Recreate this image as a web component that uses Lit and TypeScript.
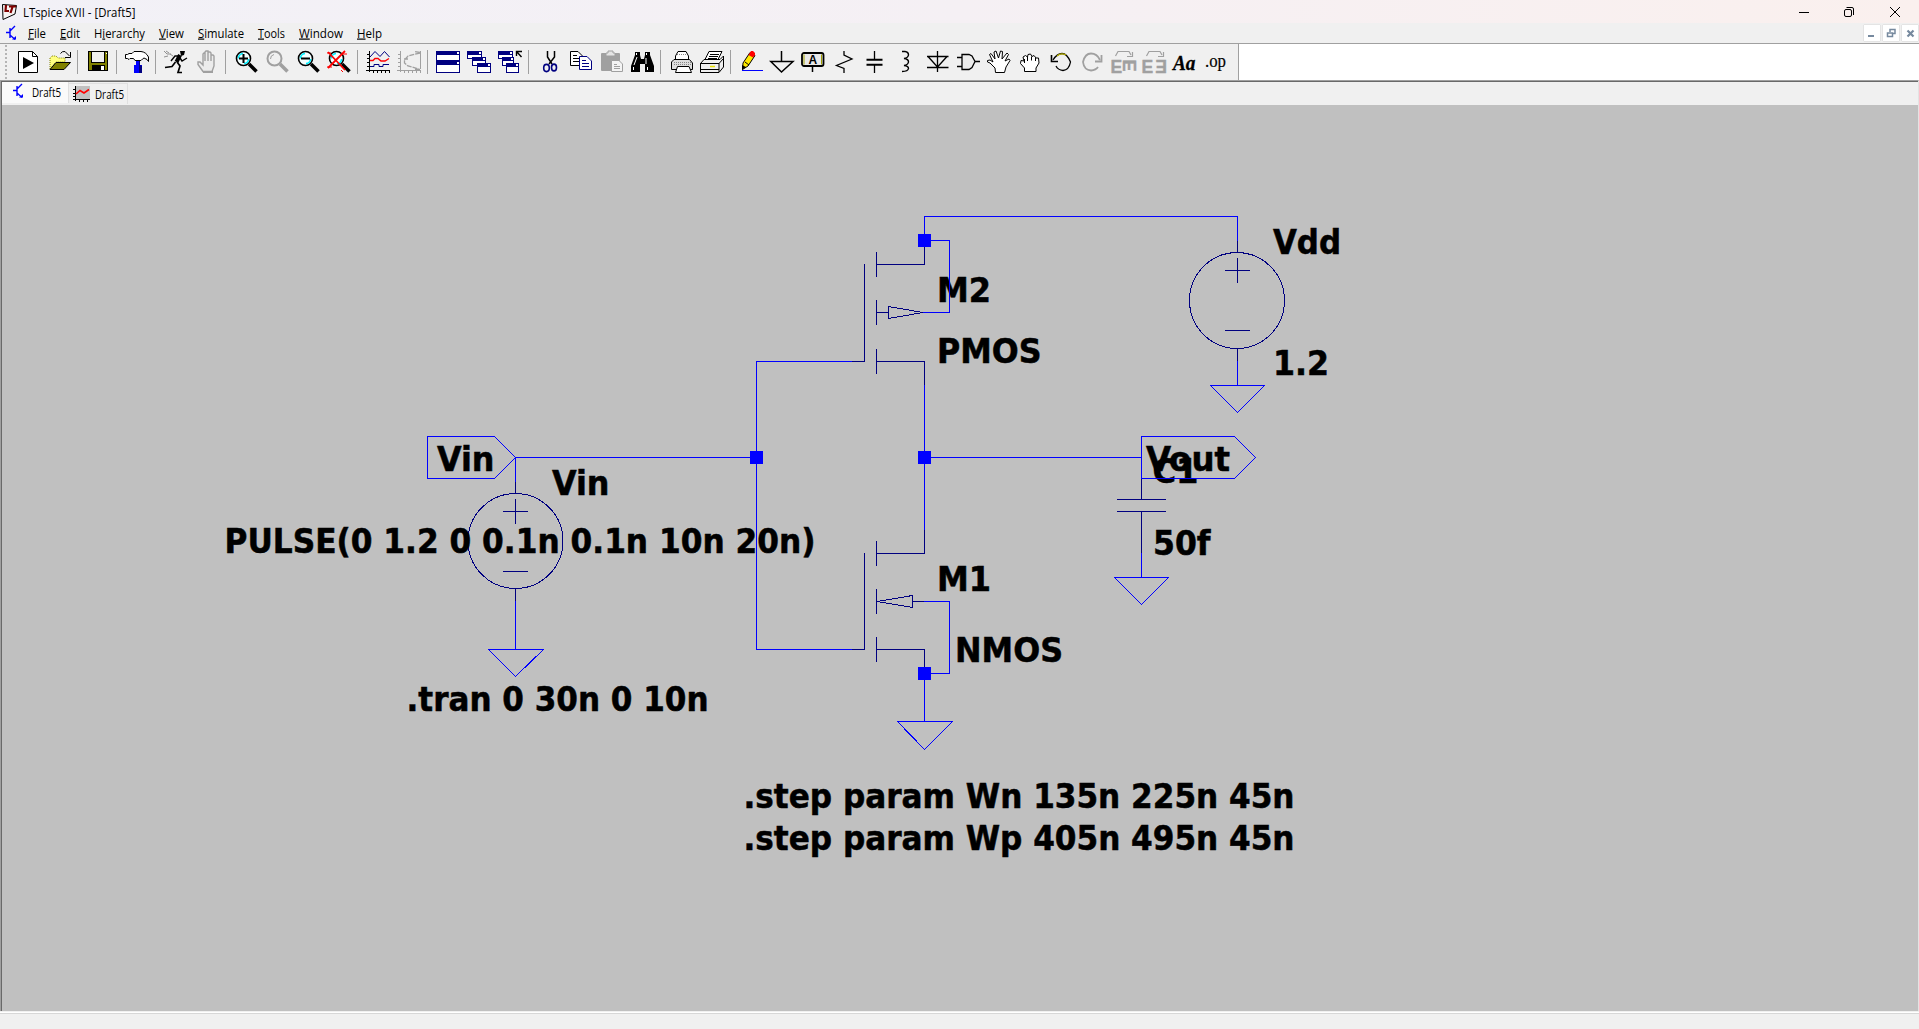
import { LitElement, html, svg, css, nothing } from "lit";
import { customElement } from "lit/decorators.js";

const lens = (inner: unknown, gray = false) => svg`
  <circle cx="9.5" cy="8.5" r="7" fill=${gray ? "none" : "#f4ffff"} stroke=${gray ? "#a0a0a0" : "#000"} stroke-width=${gray ? 2 : 1.6}/>
  ${gray
    ? svg`<path d="M5.5 9A4.5 4.5 0 0 1 9 4.5" fill="none" stroke="#a0a0a0"/>`
    : svg`<path d="M4.5 8.5A5 5 0 0 1 9 3.5M14.6 9A5 5 0 0 1 10 13.6" fill="none" stroke="#00f0ff" stroke-width="1.6"/>`}
  <path d="M15 14L22.5 21.5" stroke=${gray ? "#a0a0a0" : "#000"} stroke-width="3.6"/>
  ${inner}`;

const win = (x: number, y: number, w: number, h: number) => svg`
  <rect x=${x + 0.5} y=${y + 0.5} width=${w - 1} height=${h - 1} fill="#fff" stroke="#000080"/>
  <rect x=${x} y=${y} width=${w} height="4" fill="#000080"/>
  <rect x=${x + w - 3} y=${y + 1} width="2" height="2" fill="#fff"/>`;

const ICONS: Record<string, unknown> = {
  newdoc: svg`<path d="M2.5 1.5H16.5L21.5 6.5V22.5H2.5Z" fill="#fff" stroke="#000"/><path d="M16.5 1.5V6.5H21.5" fill="none" stroke="#000"/><path d="M7 7V19L18 13Z"/>`,
  open: svg`<path d="M3 19V8L5 6H9L11 8H18V12H9Z" fill="#ffff80" stroke="#808000" stroke-dasharray="1 1"/><path d="M3 19.5L9 12.5H23.5L17 19.5Z" fill="#808000" stroke="#000"/><path d="M13.5 3.5Q15 1 18 1.5L22.5 6M23.5 2V7.5H18" fill="none" stroke="#000"/>`,
  save: svg`<rect x="2.5" y="1.5" width="19" height="19" fill="#808000" stroke="#000"/><rect x="5.5" y="1.5" width="13" height="11" fill="#f0f0f0" stroke="#000"/><rect x="6" y="15" width="13" height="6"/><rect x="15" y="16" width="3" height="4" fill="#fff"/><rect x="20" y="3" width="1" height="1" fill="#fff"/>`,
  hammer: svg`<path d="M.5 4.5H2.5L4 3.5H7L9 1.5H16Q21 2 23.5 7V11.5L22 9.5L19 8L17.5 9L16 10.5H10L8.5 8.5H5L4 9.5L2.5 8.5H.5Z" fill="#fff" stroke="#000"/><path d="M11 11H15V15H17V23H9V15H11Z" fill="#0000ff"/><path d="M15 11V15L17 16V23H14V11Z" fill="#000080"/>`,
  run: svg`<path d="M16 1H21L20 5L17 6Z"/><path d="M16 5L12.5 12" stroke="#000" stroke-width="4"/><path d="M15 6H11L7 11M16 8L18 11L23 8" fill="none" stroke="#000" stroke-width="1.4"/><path d="M11.5 12L8 16.5L1 17.5M13 12L16 16L14 22.5H18" fill="none" stroke="#000" stroke-width="1.7"/><path d="M0 1L3 4H7M2 1L5 3M6 4L9 6M0 7L4 6" fill="none" stroke="#909090"/>`,
  halt: svg`<path d="M8 21.5L3 14.5L3 12H5L8 15V4L9 3H10V11V2L11 1H13V11V2H15L16 3V11V5H18L19 6V16L17 21.5Z" fill="#ececec" stroke="#a0a0a0" stroke-width="1.4"/><path d="M8 22H18" stroke="#a0a0a0" stroke-width="2"/>`,
  zoomin: lens(svg`<path d="M5 8.5H14M9.5 4V13" stroke="#000" stroke-width="2"/>`),
  zoompan: lens(nothing, true),
  zoomout: lens(svg`<path d="M5 8.5H14" stroke="#000" stroke-width="2"/>`),
  zoomfit: lens(svg`<path d="M1 2L18 20M18 1L1 18" stroke="#ff0000" stroke-width="1.8"/><path d="M0 3H4M15 4H20M0 17H5M14 20L16 22" stroke="#ff0000"/>`),
  plot: svg`<path d="M3.5 1V22M0 20.5H24M1 4.5H3M1 8.5H3M1 12.5H3M1 16.5H3M7.5 20V23M11.5 20V23M15.5 20V23M19.5 20V23M23.5 20V23" stroke="#000"/><path d="M4 7L9 1.5L14 6.5L18.5 1.5L23.5 7M4 16.5H8V14.5H13V16.5H17V14.5H23" fill="none" stroke="#000080"/><path d="M4 10.5H7L9 8.5H12L15 11H19L23 8.5" fill="none" stroke="#ff0000" stroke-width="1.4"/>`,
  plotbox: svg`<path d="M3.5 1V22M0 20.5H24M1 4.5H3M1 8.5H3M1 12.5H3M1 16.5H3M7.5 20V23M11.5 20V23M15.5 20V23M19.5 20V23M23.5 20V23M23.5 1V19" stroke="#a0a0a0"/><path d="M23 2.5L18 1.500M23 3L11 6L7.500 10V13L11 16L22 19M18 19.500H24M7 9L11 9" stroke="#a0a0a0" stroke-width="1.300" fill="none" stroke-dasharray="5 1"/>`,
  tile: svg`${win(0, 1, 24, 10)}${win(0, 11, 24, 12)}`,
  cascade: svg`${win(0, 1, 15, 8)}${win(5, 7, 14, 9)}${win(10, 13, 14, 10)}`,
  closeall: svg`${win(0, 1, 15, 8)}${win(4, 7, 12, 9)}${win(8, 13, 13, 10)}<path d="M18.5 6V1.5H24M19 2L23.5 7" fill="none" stroke="#000" stroke-width="1.4"/>`,
  cut: svg`<path d="M10.5 1V7L15 14M17.5 1V7L12 14" fill="none" stroke="#000" stroke-width="1.5"/><ellipse cx="9.5" cy="18" rx="2.8" ry="3.6" fill="none" stroke="#000080" stroke-width="1.6"/><ellipse cx="17" cy="17.5" rx="2.5" ry="3.4" fill="none" stroke="#000080" stroke-width="1.6"/>`,
  copy: svg`<path d="M2.5 1.5H10L14.5 6V15.5H2.5Z" fill="#fff" stroke="#000"/><path d="M5 5.5H9M5 8.5H11M5 11.5H11" stroke="#000"/><path d="M11.5 6.5H19L23.5 11V19.5H11.5Z" fill="#fff" stroke="#000080"/><path d="M14 10.5H18M14 13.5H21M14 16.5H21" stroke="#000080"/>`,
  paste: svg`<rect x="2" y="3" width="19" height="18" rx="1" fill="#a0a0a0"/><path d="M7 6V3H9V1H14V3H16V6Z" fill="#e4e4e4" stroke="#a0a0a0"/><path d="M12.5 10.5H20L23.5 14V21.5H12.5Z" fill="#f4f4f4" stroke="#a0a0a0"/><path d="M15 14.5H18M15 16.5H21M15 18.5H21" stroke="#a0a0a0"/>`,
  find: svg`<path d="M5 2H10V5L11 9H14L15 5V2H20V5L24 16V22H15V14H10V22H1V16L5 5Z"/><path d="M6.5 3V5M16.5 3V5M4 15L7 7M16 14V8M3.500 17V20M17.5 17V20" stroke="#fff"/>`,
  print: svg`<path d="M6.500 9V6L9 1.5H17L19.5 6V9" fill="#fff" stroke="#000"/><path d="M2.5 19.5V12L5 9.500H20.500L23.500 13V19.500Z" fill="#ddd" stroke="#000"/><path d="M8.500 16.500H20L22.500 22.500H6.500Z" fill="#fff" stroke="#000"/><path d="M8 4.500H18M5 12.500H22M5 14.500H22" stroke="#888" stroke-dasharray="1 1"/>`,
  setup: svg`<path d="M5 9.500L9 1.500H22L18 9.500" fill="#fff" stroke="#000"/><path d="M10 4.500H19M9 6.500H18M8 8.500H17" stroke="#000"/><path d="M.5 13.500L4 9.500H20L23.500 6V17L19 22.500H.5Z" fill="#f0f0f0" stroke="#000"/><path d="M0 13.500H19L23 9M19 13V22M0 19.500H19" fill="none" stroke="#000"/><path d="M10 16.500H15" stroke="#e8e000" stroke-width="1.5"/>`,
  wire: svg`<path d="M3.500 19.500L4 13L11 2.500L16 5.500L9 16Z" fill="#ffe900" stroke="#000"/><path d="M3 20V15L7 17Z"/><path d="M9.500 5L12 1H14L16 3V5L14 7.500Z" fill="#ff0000"/><path d="M6 12L10 15" stroke="#000"/><path d="M3 20.500H24" stroke="#0000ff"/>`,
  ground: svg`<path d="M11.500 1V11.500M.8 11.500H23L11.500 22Z" fill="none" stroke="#000" stroke-width="1.500"/>`,
  label: svg`<rect x="1" y="3" width="21.500" height="13" rx="2" fill="#e8e8e8" stroke="#000" stroke-width="1.800"/><path d="M3 4.500V14.500M20.500 4.500V14.500" stroke="#a0a000"/><path d="M11.500 16V22" stroke="#000" stroke-width="1.500"/><text x="7.500" y="13.800" font-family="Liberation Sans" font-weight="700" font-size="12">A</text>`,
  resistor: svg`<path d="M12 1V5L20 9L4.500 15.500L12 18.500V23" fill="none" stroke="#000" stroke-width="1.300"/>`,
  capacitor: svg`<path d="M11.500 1V9M11.500 15V23" stroke="#000" stroke-width="1.300"/><path d="M3.500 9.800H19.500M3.500 14.800H19.500" stroke="#000" stroke-width="2"/>`,
  inductor: svg`<path d="M8 1.500H11Q14.500 2 14.500 5Q14 8 10 8.500Q14.500 9 14.500 12Q14 15 10 15.500Q14.500 16 14.500 18.500Q14 21.500 8 21.500" fill="none" stroke="#000" stroke-width="1.400"/>`,
  diode: svg`<path d="M12.500 1V22M2 6.500H23.500M3 6.500L12.500 17L22 6.500M2 17.500H23.500" fill="none" stroke="#000" stroke-width="1.300"/>`,
  gate: svg`<path d="M1 7.500H6M1 16.500H6M19 11.500H24" stroke="#000" stroke-width="1.300"/><path d="M6 4.500H13L16 6L19 11.500L16 17.500L13 19.500H6Z" fill="#ececec" stroke="#000" stroke-width="1.300"/>`,
  move: svg`<path d="M8.500 22.500L8 18L3 13L.5 12V10.500L3 10L6 12L2.500 4.500L4 3.500L8 9L7 2L9 1L11.500 8L13.500 1L15.500 1.500L15 9L20 3L21.500 4.500L18 11L22 9L23 10.500L19 17L17.500 22.500Z" fill="#fff" stroke="#000"/>`,
  drag: svg`<path d="M6.500 21.500V18L2.500 13.500L3 10.500L6 11L5 7L7.500 5.500L9.500 7L10 4.500L12.500 4L14 6.500L16 5.500L18 8H20.500L21 13L18 18V21.500Z" fill="#fff" stroke="#000"/><path d="M9.500 7V11M13.500 6.500V10.500M17.500 8V11M6.500 9V13" stroke="#000"/>`,
  undo: svg`<path d="M4 10Q8 3.500 13 3.500T21.500 12Q20 20 14 20.500Q9 20 7 16" fill="none" stroke="#000" stroke-width="1.300"/><path d="M8 6Q12 2.500 17 5" fill="none" stroke="#b8b000" stroke-width="1.200"/><path d="M2.500 5V11.500H9" fill="none" stroke="#000" stroke-width="1.600"/>`,
  redo: svg`<path d="M20 10Q17 3.500 11 3.500T3 12Q4 20 11 20.500Q16 20 18 17" fill="none" stroke="#a0a0a0" stroke-width="1.800"/><path d="M21.500 5V11.500H15" fill="none" stroke="#a0a0a0" stroke-width="1.800"/>`,
  rotate: svg`<path d="M4.500 6L7 1.500H18L20 5M21.500 2V6.500H16" fill="none" stroke="#a0a0a0" stroke-width="1.200"/><text class="g" x="-.5" y="22.500">E</text><text class="g" transform="translate(11.500 9.500) rotate(90)" textLength="12" lengthAdjust="spacingAndGlyphs">E</text>`,
  mirror: svg`<path d="M4.500 6L7 1.500H18L20 5M21.500 2V6.500H16" fill="none" stroke="#a0a0a0" stroke-width="1.200"/><text class="g" x="-.5" y="22.500">E</text><text class="g" transform="translate(25 22.500) scale(-1 1)">E</text>`,
  text: svg`<text x="0" y="20" font-family="Liberation Serif" font-weight="700" font-style="italic" font-size="20" stroke="#000" stroke-width=".3" textLength="22.500" lengthAdjust="spacingAndGlyphs">Aa</text>`,
  op: svg`<text x="1" y="17" font-family="Liberation Serif" font-size="19" stroke="#000" stroke-width=".2" textLength="21" lengthAdjust="spacingAndGlyphs">.op</text>`,
};

const GROUPS = [
  ["newdoc", "open"], ["save"], ["hammer"], ["run", "halt"],
  ["zoomin", "zoompan", "zoomout", "zoomfit"], ["plot", "plotbox"],
  ["tile", "cascade", "closeall"], ["cut", "copy", "paste", "find"],
  ["print", "setup"],
  ["wire", "ground", "label", "resistor", "capacitor", "inductor", "diode", "gate", "move", "drag", "undo", "redo", "rotate", "mirror", "text", "op"],
];

// label, index of the access key, cell width, text width
const MENU: [string, number, number, number][] = [
  ["File", 0, 32, 18], ["Edit", 0, 34, 20], ["Hierarchy", 1, 65, 51], ["View", 0, 39, 25],
  ["Simulate", 0, 60, 46], ["Tools", 0, 41, 27], ["Window", 0, 58, 44], ["Help", 0, 40, 25],
];

const transistor = svg`<path d="M1 7.500H5M5 3V13M5 6L10 1M5 10L10 14.500" fill="none" stroke="#0000ff" stroke-width="1.400"/><path d="M7 14.500H11V11Z" fill="#0000ff"/>`;

// text, left, baseline, advance width
const LABELS: [string, number, number, number][] = [
  ["Vdd", 1273, 253.500, 68], ["1.2", 1273, 375, 56], ["M2", 937, 302, 54], ["PMOS", 937, 363, 104.500],
  ["Vin", 437, 471, 57.500], ["Vin", 552, 495, 57.500], ["PULSE(0 1.2 0 0.1n 0.1n 10n 20n)", 224.500, 552.500, 591],
  [".tran 0 30n 0 10n", 406.500, 710.500, 302], ["C1", 1152.500, 482.500, 46], ["Vout", 1146, 471, 84],
  ["50f", 1153, 555, 57.500], ["M1", 937, 591, 54], ["NMOS", 955, 662, 108],
  [".step param Wn 135n 225n 45n", 743.500, 808, 551], [".step param Wp 405n 495n 45n", 743.500, 850, 551],
];

@customElement("app-root")
export class AppRoot extends LitElement {
  static styles = css`
    :host { display: flex; flex-direction: column; width: 100%; height: 100vh; overflow: hidden; background: #f0f0f0; color: #000; font: 12px "Open Sans", "Noto Sans", sans-serif; }
    svg { display: block; flex: none; overflow: visible; }
    .title { height: 23px; flex: none; display: flex; align-items: center; background: linear-gradient(90deg, #f2f1f7, #f5f0f4 50%, #faf0ee); }
    .title .logo { margin-left: 2px; }
    .name { flex: 1; margin-left: 5px; }
    .fit text { font: 12px "Open Sans", "Noto Sans", sans-serif; }
    .controls { display: flex; gap: 34px; margin-right: 18px; }
    .menu { height: 20px; flex: none; display: flex; align-items: center; border-bottom: 1px solid #a0a0a0; background: #f0f0f0; }
    .menu .sym { margin: 0 11px 0 5px; }
    .menu .entry { margin-bottom: 1px; }
    .entry { flex: none; }
    .mdi { margin-left: auto; display: flex; gap: 3px; margin-right: 1px; }
    .mdi span { width: 16px; height: 16px; background: #fff; box-shadow: 0 0 1px #aaa; }
    .tools { height: 36px; flex: none; display: flex; background: #fff; }
    .bar { width: 1225px; display: flex; align-items: stretch; padding-left: 13px; background: #f0f0f0; border-right: 1px solid #a0a0a0; background-image: radial-gradient(circle, #b4b4b4 1px, transparent 1.300px); background-size: 4px 4px; background-repeat: repeat-y; background-position: 4px 4px; }
    .btn { width: 28px; padding: 6px 0 0 3px; flex: none; }
    .btn text.g { font: 700 17.500px "Liberation Sans", sans-serif; fill: #a0a0a0; stroke: #a0a0a0; stroke-width: .4px; }
    .sep { width: 5px; flex: none; margin: 6px 0 6px 2px; border-left: 1px solid #a0a0a0; }
    .work { flex: 1; min-height: 0; display: flex; flex-direction: column; border-top: 1px solid #a0a0a0; border-left: 1px solid #a0a0a0; border-right: 1px solid #e3e3e3; }
    .inner { flex: 1; min-height: 0; display: flex; flex-direction: column; border-top: 1px solid #696969; border-left: 1px solid #696969; }
    .tabs { height: 23px; flex: none; display: flex; align-items: flex-start; background: #f0f0f0; }
    .tab { height: 20px; display: flex; align-items: center; border-right: 1px solid #e0e0e0; }
    .tab.on { width: 66px; height: 21px; background: #fafafa; }
    .tab.off { width: 58px; border-top: 1px solid #e0e0e0; margin-top: 1px; }
    .tab.on svg.i { margin: 0 8px 3px 10px; }
    .tab.on .fit { margin-bottom: 2px; }
    .tab.off svg.i { margin: 0 5px 0 4px; }
    .sheet { flex: 1; min-height: 0; background: #c0c0c0; }
    .w { fill: none; stroke: #0000ff; }
    .s { fill: none; stroke: #000080; }
    .n { fill: #0000ff; }
    .lbl { font: 700 34.300px "DejaVu Sans Condensed", "DejaVu Sans", sans-serif; font-stretch: condensed; stroke: #000; stroke-width: .5px; }
    .status { height: 15px; flex: none; border-top: 1px solid #d7d7d7; box-shadow: 0 -1px 0 #fff; background: #f0f0f0; margin-top: 2px; }
  `;

  private fit(label: string, width: number, key = -1, cell = width + 2) {
    const body = key < 0 ? label : svg`${label.slice(0, key)}<tspan text-decoration="underline">${label[key]}</tspan>${label.slice(key + 1)}`;
    return html`<svg class="fit entry" width=${cell} height="18"><text x="0" y="13.500" textLength=${width} lengthAdjust="spacingAndGlyphs">${body}</text></svg>`;
  }

  render() {
    return html`
      <div class="title">
        <svg class="logo" width="16" height="16"><path d="M.5 .5L14.500 1.500L13 10L1 15.500Z" fill="#f6f2f2" stroke="#000"/><path d="M4 1L3.500 7H7M7 2.500H14M10.500 3L8.500 9" fill="none" stroke="#800000" stroke-width="2.200"/></svg>
        <div class="name">${this.fit("LTspice XVII - [Draft5]", 112.5)}</div>
        <div class="controls">
          <svg width="12" height="12"><path d="M2 6.500H12" stroke="#000"/></svg>
          <svg width="12" height="12"><rect x="1.500" y="3.500" width="7" height="7" rx="1.500" fill="none" stroke="#000"/><path d="M3.500 1.500H9Q10.500 1.500 10.500 3V9" fill="none" stroke="#000"/></svg>
          <svg width="12" height="12"><path d="M1 1L11 11M11 1L1 11" stroke="#000"/></svg>
        </div>
      </div>
      <div class="menu">
        <svg class="sym" width="12" height="16">${transistor}</svg>
        ${MENU.map(([t, k, cell, w]) => this.fit(t, w, k, cell))}
        <div class="mdi">
          <span><svg width="16" height="16"><path d="M4 11H10" stroke="#76899e" stroke-width="2"/></svg></span>
          <span><svg width="16" height="16"><path d="M7 7V4.500H12V8.500H10M4.500 8H9.500V11.500H4.500Z" fill="none" stroke="#76899e" stroke-width="1.500"/></svg></span>
          <span><svg width="16" height="16"><path d="M5.500 5.500L11.500 11.500M11.500 5.500L5.500 11.500" stroke="#76899e" stroke-width="2.200"/></svg></span>
        </div>
      </div>
      <div class="tools"><div class="bar">
        ${GROUPS.map((g, i) => html`${i ? html`<div class="sep"></div>` : nothing}${g.map((n) => html`<div class="btn"><svg width="25" height="24">${ICONS[n]}</svg></div>`)}`)}
      </div></div>
      <div class="work"><div class="inner">
        <div class="tabs">
          <div class="tab on"><svg class="i" width="12" height="16">${transistor}</svg>${this.fit("Draft5", 29)}</div>
          <div class="tab off"><svg class="i" width="17" height="16"><rect x="3" width="14" height="13" fill="#c0c0c0"/><path d="M2.500 0V15M0 13.500H17M0 3.500H2M0 7.500H2M0 10.500H2M6.500 13V16M10.500 13V16M14.500 13V16" stroke="#000"/><path d="M3 8L7 4.500L11 7L16 3.500" fill="none" stroke="#ff0000" stroke-width="1.600"/></svg>${this.fit("Draft5", 29)}</div>
        </div>
        <div class="sheet">
          <svg width="1916" height="906" viewBox="2 105 1916 906">
            <g class="s" shape-rendering="crispEdges">
              <path d="M924.500 247V264.500H876.500M876.500 252V277M876.500 300V325M876.500 349V374M864.500 264V361.500H852M876.500 312.500H888.500M888.500 306.500V318.500L923 312.500ZM876.500 361.500H924.500V385"/>
              <path d="M924.500 530V553.500H876.500M876.500 541V566M876.500 589V614M876.500 637V662M864.500 553V649.500H852M924 601.500H912.500M912.500 595.500V607.500L877 601.500ZM876.500 649.500H924.500V668"/>
              <circle cx="515.500" cy="541" r="47.500"/><path d="M515.500 482V493M515.500 588V601M503 511.500H528M515.500 499V524M503 571.500H528"/>
              <ellipse cx="1237" cy="300.500" rx="47.500" ry="48"/><path d="M1237.500 241V252M1237.500 348V361M1225 270.500H1250M1237.500 258V283M1225 330.500H1250"/>
              <path d="M1141.500 478V499.500M1117 499.500H1166M1117 511.500H1166M1141.500 511V553"/>
            </g>
            ${LABELS.map(([t, x, y, w]) => svg`<text class="lbl" x=${x} y=${y} textLength=${w} lengthAdjust="spacingAndGlyphs">${t}</text>`)}
            <g class="w" shape-rendering="crispEdges">
              <path d="M924.500 240V216.500H1237.500V241M1237.500 361V385.500M924.500 240.500H949.500V312.500H923M852 361.500H756.500V649.500H852M756.500 457.500H515.500V482M515.500 601V649.500M924.500 385V530M924.500 457.500H1141.500M924 601.500H949.500V673.500H924.500V721.500M1141.500 553V577.500"/>
              <path d="M1210.500 385.500H1264.500L1237.500 412.500ZM488.500 649.500H543.500L515.500 676.500ZM897.500 721.500H952.500L924.500 749.500ZM1114.500 577.500H1168.500L1141.500 604.500Z"/>
              <path d="M427.500 436.500H494.500L515.500 457.500L494.500 478.500H427.500ZM1141.500 436.500H1234.500L1255.500 457.500L1234.500 478.500H1141.500Z"/>
            </g>
            <path class="n" d="M918 234H931V247H918ZM750 451H763V464H750ZM918 451H931V464H918ZM918 667H931V680H918Z"/>
          </svg>
        </div>
      </div></div>
      <div class="status"></div>
    `;
  }
}
